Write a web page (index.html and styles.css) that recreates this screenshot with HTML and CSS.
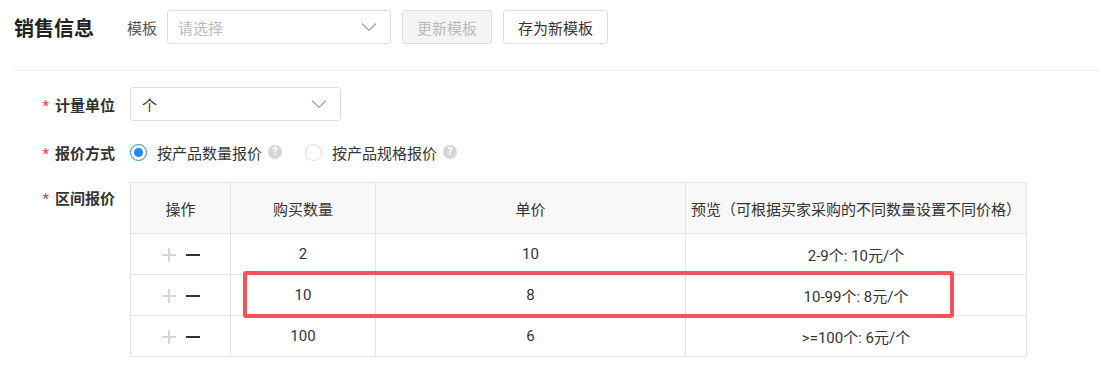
FILE: index.html
```
<!DOCTYPE html>
<html lang="zh-CN">

<head>
    <meta charset="UTF-8">
    <meta name="viewport" content="width=device-width, initial-scale=1.0">
    <title>销售信息</title>
    <link rel="stylesheet" href="styles.css">
</head>

<body>
    <div class="page">
        <div class="head">
            <h2 class="title">销售信息</h2>
            <span class="tpl-label">模板</span>
            <div class="select tpl-select">
                <span class="placeholder">请选择</span>
                <svg class="arrow" width="16" height="10" viewBox="0 0 16 10"><path d="M1 1.5 L8 8.5 L15 1.5" fill="none" stroke="#a0a0a0" stroke-width="1.2"/></svg>
            </div>
            <button class="btn disabled">更新模板</button>
            <button class="btn">存为新模板</button>
        </div>
        <div class="divider"></div>

        <div class="form">
            <div class="form-item item-unit">
                <label class="form-label"><i>*</i>计量单位</label>
                <div class="select unit-select">
                    <span>个</span>
                    <svg class="arrow" width="16" height="10" viewBox="0 0 16 10"><path d="M1 1.5 L8 8.5 L15 1.5" fill="none" stroke="#a0a0a0" stroke-width="1.2"/></svg>
                </div>
            </div>

            <div class="form-item item-mode">
                <label class="form-label"><i>*</i>报价方式</label>
                <div class="radios">
                    <span class="radio checked"></span>
                    <span class="radio-text">按产品数量报价</span>
                    <span class="help">?</span>
                    <span class="radio"></span>
                    <span class="radio-text">按产品规格报价</span>
                    <span class="help">?</span>
                </div>
            </div>

            <div class="form-item item-range">
                <label class="form-label"><i>*</i>区间报价</label>
                <div class="table-wrap">
                    <table class="price-table">
                        <colgroup>
                            <col class="c-op">
                            <col class="c-qty">
                            <col class="c-price">
                            <col class="c-view">
                        </colgroup>
                        <thead>
                            <tr>
                                <th>操作</th>
                                <th>购买数量</th>
                                <th>单价</th>
                                <th>预览（可根据买家采购的不同数量设置不同价格）</th>
                            </tr>
                        </thead>
                        <tbody>
                            <tr>
                                <td><span class="op-add"></span><span class="op-del"></span></td>
                                <td>2</td>
                                <td>10</td>
                                <td>2-9个: 10元/个</td>
                            </tr>
                            <tr>
                                <td><span class="op-add"></span><span class="op-del"></span></td>
                                <td>10</td>
                                <td>8</td>
                                <td>10-99个: 8元/个</td>
                            </tr>
                            <tr>
                                <td><span class="op-add"></span><span class="op-del"></span></td>
                                <td>100</td>
                                <td>6</td>
                                <td>&gt;=100个: 6元/个</td>
                            </tr>
                        </tbody>
                    </table>
                    <div class="mark"></div>
                </div>
            </div>
        </div>
    </div>
</body>

</html>
```

FILE: styles.css
```
body {
    margin: 0;
    font-family: Roboto, "Noto Sans CJK SC", sans-serif;
    font-size: 15px;
    color: #333;
    background: #fff;
}

.page {
    padding-top: 10px;
}

.head {
    display: flex;
    align-items: center;
    height: 34px;
    padding-left: 14px;
}

.title {
    margin: 0;
    font-size: 20px;
    font-weight: bold;
    color: #222;
    width: 113px;
}

.tpl-label {
    color: #555;
    margin-right: 10px;
}

.select {
    box-sizing: border-box;
    height: 34px;
    border: 1px solid #ddd;
    border-radius: 3px;
    display: flex;
    align-items: center;
    justify-content: space-between;
    padding: 0 13px 0 10px;
}

.tpl-select {
    width: 224px;
}

.placeholder {
    color: #bbb;
}

.arrow {
    display: block;
}

.btn {
    box-sizing: border-box;
    height: 34px;
    margin-left: 11px;
    padding: 0 14px;
    border: 1px solid #ddd;
    border-radius: 3px;
    background: #fff;
    font-family: inherit;
    font-size: 15px;
    color: #333;
}

.btn.disabled {
    background: #f4f4f4;
    color: #bbb;
}

.divider {
    margin: 26px 0 0 14px;
    height: 1px;
    background: #ececec;
}

.form {
    padding-top: 16px;
}

.form-item {
    display: flex;
    align-items: center;
}

.form-label {
    width: 115px;
    margin-right: 15px;
    text-align: right;
    font-weight: bold;
    color: #333;
}

.form-label i {
    font-style: normal;
    color: #f33;
    font-weight: normal;
    margin-right: 6px;
}

.unit-select {
    width: 211px;
    padding-left: 11px;
}

.item-mode {
    height: 28px;
    margin-top: 17px;
}

.radios {
    display: flex;
    align-items: center;
}

.radio {
    box-sizing: border-box;
    width: 17px;
    height: 17px;
    border: 1px solid #d9d9d9;
    border-radius: 50%;
    margin-right: 10px;
    position: relative;
}

.radio.checked {
    border-color: #1e88f0;
}

.radio.checked::after {
    content: "";
    position: absolute;
    left: 3px;
    top: 3px;
    width: 9px;
    height: 9px;
    border-radius: 50%;
    background: #1e88f0;
}

.help {
    width: 14px;
    height: 14px;
    border-radius: 50%;
    background: #d6d6d6;
    color: #fff;
    font-size: 11px;
    font-weight: bold;
    line-height: 14px;
    text-align: center;
    margin-left: 6px;
    margin-right: 23px;
}

.item-range {
    align-items: flex-start;
    margin-top: 16px;
}

.item-range .form-label {
    line-height: 34px;
}

.table-wrap {
    position: relative;
}

.price-table {
    border-collapse: collapse;
    table-layout: fixed;
    width: 897px;
}

.price-table th,
.price-table td {
    border: 1px solid #e4e4e4;
    text-align: center;
    font-weight: normal;
    padding: 0;
}

.price-table th {
    height: 50px;
    background: #f8f8f8;
}

.price-table td {
    height: 40px;
}

.c-op {
    width: 100px;
}

.c-qty {
    width: 145px;
}

.c-price {
    width: 310px;
}

.c-view {
    width: 341px;
}

.op-add,
.op-del {
    display: inline-block;
    width: 14px;
    height: 14px;
    position: relative;
    vertical-align: middle;
    margin: 0 5px;
}

.op-add::before,
.op-add::after,
.op-del::before {
    content: "";
    position: absolute;
}

.op-add::before {
    left: 0;
    top: 6px;
    width: 14px;
    height: 2px;
    background: #d6d6d6;
}

.op-add::after {
    left: 6px;
    top: 0;
    width: 2px;
    height: 14px;
    background: #d6d6d6;
}

.op-del::before {
    left: 0;
    top: 6px;
    width: 14px;
    height: 2px;
    background: #333;
}

.mark {
    position: absolute;
    left: 113px;
    top: 89px;
    width: 711px;
    height: 47px;
    box-sizing: border-box;
    border: 4px solid #f5535a;
    border-radius: 3px;
}
```
